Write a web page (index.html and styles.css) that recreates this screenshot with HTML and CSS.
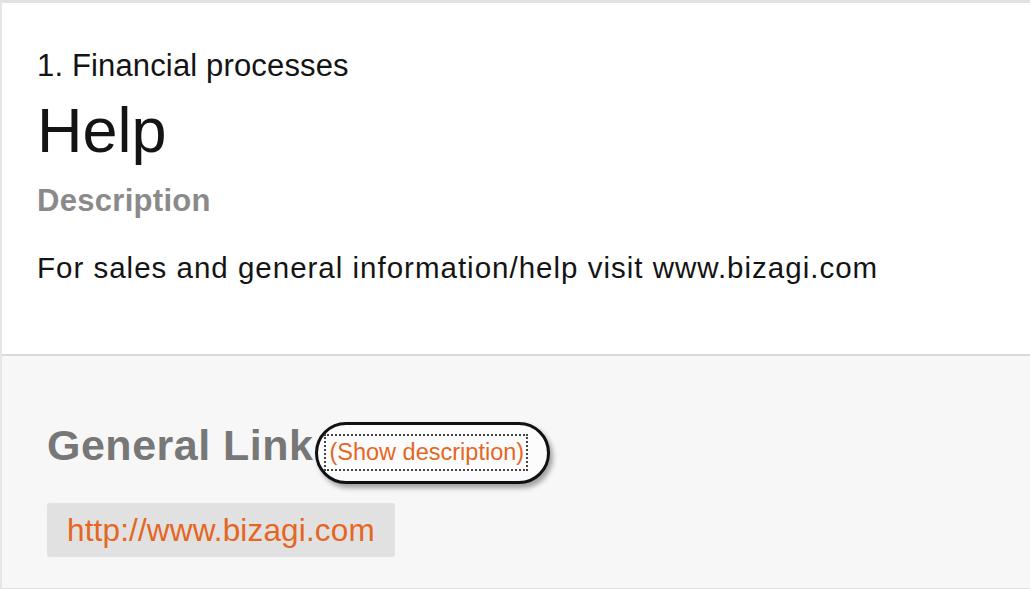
FILE: index.html
```html
<!DOCTYPE html>
<html lang="en">
<head>
<meta charset="utf-8">
<title>Help</title>
<link rel="stylesheet" href="styles.css">
</head>
<body>
<div class="panel">
  <section class="header">
    <div class="crumb">1. Financial processes</div>
    <h1 class="title">Help</h1>
    <h3 class="label">Description</h3>
    <p class="text">For sales and general information/help visit www.bizagi.com</p>
  </section>
  <section class="links">
    <h2 class="links-title">General Link<span class="annot"><span class="ring"></span><a class="show-desc" href="#">(Show description)</a></span></h2>
    <div class="link-box"><a class="link" href="#">http://www.bizagi.com</a></div>
  </section>
</div>
</body>
</html>
```

FILE: styles.css
```css
html, body {
  margin: 0;
  padding: 0;
  background: #ffffff;
}

body {
  font-family: "Liberation Sans", Arial, sans-serif;
  color: #141414;
  overflow: hidden;
}

.panel {
  border-top: 3px solid #e2e2e2;
  border-left: 2px solid #e6e6e6;
  width: 1028px;
}

.header {
  padding: 46px 0 70px 35px;
}

.crumb {
  font-size: 31px;
  line-height: 34px;
  letter-spacing: 0.15px;
}

.title {
  margin: 11px 0 0 0;
  font-size: 63px;
  line-height: 72px;
  font-weight: normal;
}

.label {
  margin: 18px 0 0 0;
  font-size: 31px;
  line-height: 34px;
  font-weight: bold;
  color: #8a8a8a;
  letter-spacing: 0.3px;
}

.text {
  margin: 34px 0 0 0;
  font-size: 29.5px;
  line-height: 32px;
  letter-spacing: 1px;
}

.links {
  background: #f7f7f7;
  border-top: 2px solid #dadada;
  border-bottom: 2px solid #e0e0e0;
  padding: 65px 0 31px 45px;
}

.links-title {
  margin: 0;
  font-size: 43px;
  line-height: 48px;
  font-weight: bold;
  color: #777777;
  letter-spacing: 0.5px;
}

.annot {
  position: relative;
  display: inline-block;
  margin-left: 11px;
  line-height: 27px;
  letter-spacing: 0;
}

.ring {
  position: absolute;
  left: -9px;
  top: -10px;
  right: -22px;
  bottom: -13px;
  border: 3px solid #111111;
  border-radius: 32px;
  background: #fcfcfc;
  box-shadow: 3px 4px 5px rgba(0, 0, 0, 0.35);
}

.show-desc {
  position: relative;
  display: inline-block;
  padding: 5px 4px 5px 5px;
  font-size: 23.5px;
  font-weight: normal;
  color: #e5661f;
  text-decoration: none;
  outline: 2px dotted #444444;
  outline-offset: -2px;
}

.link-box {
  display: inline-block;
  margin-top: 32px;
  background: #e1e1e1;
  border-radius: 3px;
  padding: 9px 20px;
  font-size: 31.5px;
  line-height: 36px;
  vertical-align: top;
}

.link {
  color: #e5661f;
  text-decoration: none;
  letter-spacing: 0.15px;
}
```
